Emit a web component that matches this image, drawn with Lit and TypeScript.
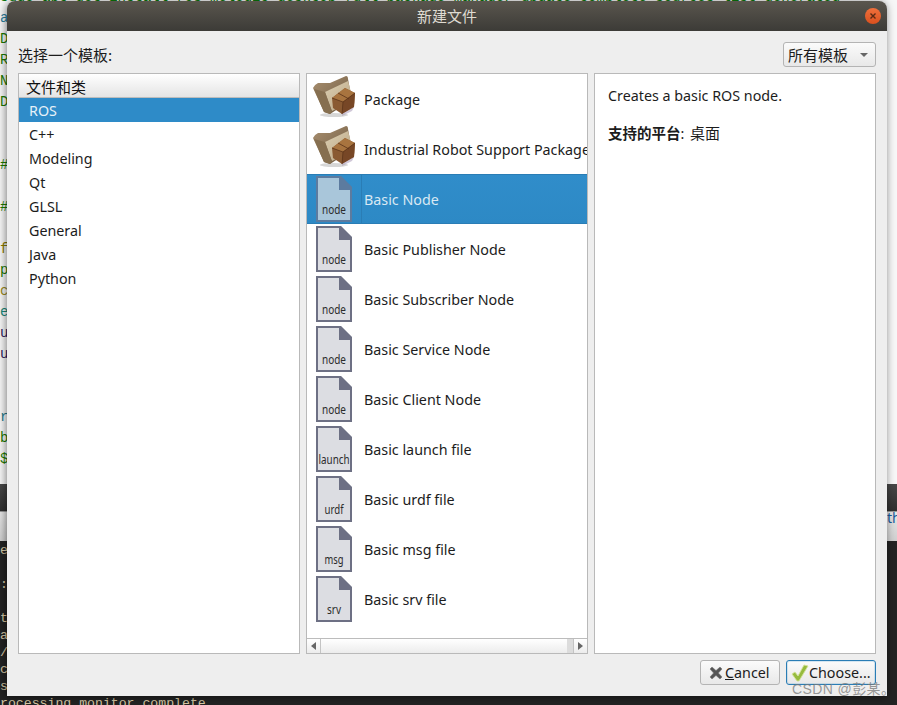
import { LitElement, html, css, svg } from 'lit';
import { customElement } from 'lit/decorators.js';
import { classMap } from 'lit/directives/class-map.js';

const CATEGORIES = ['ROS', 'C++', 'Modeling', 'Qt', 'GLSL', 'General', 'Java', 'Python'];

const TEMPLATES = [
  { name: 'Package', folder: true },
  { name: 'Industrial Robot Support Package', folder: true },
  { name: 'Basic Node', tag: 'node', fit: 24 },
  { name: 'Basic Publisher Node', tag: 'node', fit: 24 },
  { name: 'Basic Subscriber Node', tag: 'node', fit: 24 },
  { name: 'Basic Service Node', tag: 'node', fit: 24 },
  { name: 'Basic Client Node', tag: 'node', fit: 24 },
  { name: 'Basic launch file', tag: 'launch', fit: 31 },
  { name: 'Basic urdf file', tag: 'urdf', fit: 19 },
  { name: 'Basic msg file', tag: 'msg', fit: 19 },
  { name: 'Basic srv file', tag: 'srv', fit: 14 },
];

// what is left visible of the editor and terminal behind the dialog
const EDITOR_LINES = [
  ['sudo apt-get install ros-melodic-desktop-full package manager update complete sources list generated', '#0a7a0a'],
  ['a', '#2b7f9e'], ['D', '#1d7a00'], ['R', '#1d7a00'], ['N', '#1d7a00'], ['D', '#1d7a00'],
  [' ', ''], [' ', ''], ['#', '#1d7a00'], [' ', ''], ['#', '#1d7a00'], [' ', ''],
  ['f', '#8a7a00'], ['p', '#1d7a00'], ['c', '#9a8a20'], ['e', '#1c8a7a'], ['u', '#2a1a5a'], ['u', '#2a1a5a'],
  [' ', ''], [' ', ''], ['r', '#1c7a8a'], ['b', '#1d7a00'], ['$', '#1d7a00'],
];
const TERMINAL_LINES = ['e', ' ', ':', ' ', 't', 'a', '/', 'c', 's', 'rocessing monitor complete'];

const folderIcon = svg`
  <svg class="folder" width="48" height="48" viewBox="0 0 48 48">
    <defs>
      <linearGradient id="fb" x1="0" y1="0" x2="1" y2="1">
        <stop offset="0" stop-color="#a99070" /><stop offset="1" stop-color="#6a563e" />
      </linearGradient>
      <linearGradient id="pg" x1="0" y1="0" x2="1" y2="1">
        <stop offset="0" stop-color="#dccfb2" /><stop offset="1" stop-color="#b9a583" />
      </linearGradient>
    </defs>
    <ellipse cx="22" cy="41" rx="14" ry="2" fill="#000" opacity=".16" />
    <path d="M1 14 Q2 11 6 9 L18 9 L34 2 Q36 2 36 5 L40 26 L18 40 L12 38 Z" fill="url(#fb)" />
    <path d="M13 18 L36 7 L40 22 L40 27 L20 37 Z" fill="url(#pg)" />
    <path d="M2 15 L13 18 L20 38 L18 40 L12 38 Z" fill="#866f50" />
    <path d="M20 24 L33 14 L43 19 L42 33 L30 40 L21 34 Z" fill="#8a5a32" />
    <path d="M20 24 L33 14 L43 19 L31 28 Z" fill="#a8743f" />
    <path d="M31 28 L43 19 L42 33 L30 40 Z" fill="#774726" />
    <path d="M26 19 L37 25 M31 28 L30 40 M20 24 L31 28 L43 19" stroke="#5b3419" stroke-width=".8" fill="none" />
    <path d="M30 40 L42 33 L40 37 L30 42 Z" fill="#a99ab8" opacity=".55" />
  </svg>`;

const fileIcon = (tag: string, fit: number) => svg`
  <svg class="file" width="36" height="46" viewBox="0 0 36 46">
    <path class="sheet" d="M1 1 H24 L35 12 V45 H1 Z" />
    <path class="fold" d="M23 0 H25 L36 11 V14 H23 Z" />
    <text x="18" y="37.5" text-anchor="middle" textLength=${fit} lengthAdjust="spacingAndGlyphs">${tag}</text>
  </svg>`;

@customElement('app-root')
export class AppRoot extends LitElement {
  static styles = css`
    :host {
      display: block;
      position: relative;
      width: 897px;
      height: 705px;
      overflow: hidden;
      font-family: 'Noto Sans', 'Noto Sans CJK SC', sans-serif;
      font-size: 14.3px;
      color: #1c1c1c;
    }
    .cjk { font-family: 'Noto Sans CJK SC', sans-serif; font-size: 15px; }

    /* desktop behind the dialog */
    .editor {
      height: 484px;
      overflow: hidden;
      background: #f7f7f7;
      font: 14px/21px 'Liberation Mono', monospace;
    }
    .editor-lines { display: flex; flex-direction: column; margin-top: -13px; }
    .editor-lines div { height: 21px; white-space: pre; }
    .strip { height: 27px; background: linear-gradient(#474747, #2f2f2f); }
    .tabs {
      display: flex;
      justify-content: flex-end;
      height: 30px;
      box-sizing: border-box;
      border-top: 1px solid #999;
      background: linear-gradient(#e6e6e6, #cfcfcf);
      color: #15589a;
      font-size: 14px;
      line-height: 12px;
    }
    .tabs span { width: 10px; overflow: hidden; }
    .terminal {
      height: 164px;
      padding-top: 1px;
      overflow: hidden;
      background: #232323;
      color: #d8c9a6;
      font: 13.2px/17px 'Liberation Mono', monospace;
      white-space: pre;
    }

    /* dialog */
    .dialog {
      position: absolute;
      left: 7px;
      top: 1px;
      width: 880px;
      height: 695px;
      display: flex;
      flex-direction: column;
      background: #eeeeee;
      border-radius: 8px 8px 0 0;
      box-shadow: -1px 1px 8px rgba(0, 0, 0, 0.5);
    }
    .titlebar {
      flex: none;
      height: 30px;
      box-sizing: border-box;
      padding-bottom: 2px;
      display: flex;
      align-items: center;
      justify-content: center;
      position: relative;
      border-radius: 8px 8px 0 0;
      background: linear-gradient(#5a564e, #3c3b37);
      color: #dfdbd2;
    }
    .close {
      position: absolute;
      right: 6px;
      top: 7px;
      width: 16px;
      height: 16px;
    }
    .content {
      flex: 1;
      display: flex;
      flex-direction: column;
      padding: 11px 11px 11px;
      min-height: 0;
    }
    .top {
      flex: none;
      display: flex;
      justify-content: space-between;
      align-items: center;
      height: 25px;
    }
    .combo {
      width: 93px;
      height: 25px;
      box-sizing: border-box;
      display: flex;
      align-items: center;
      justify-content: space-between;
      padding: 0 7px 0 4px;
      border: 1px solid #b4b4b4;
      border-radius: 3px;
      background: linear-gradient(#fbfbfb, #e8e8e8);
    }
    .caret {
      width: 0;
      height: 0;
      border-left: 4px solid transparent;
      border-right: 4px solid transparent;
      border-top: 4px solid #666;
    }
    .panels {
      flex: 1;
      min-height: 0;
      margin-top: 6px;
      display: grid;
      grid-template-columns: repeat(3, 282px);
      gap: 6px;
    }
    .panel {
      box-sizing: border-box;
      border: 1px solid #b9b9b9;
      background: #fff;
      min-height: 0;
      display: flex;
      flex-direction: column;
      overflow: hidden;
    }
    .list-head {
      flex: none;
      height: 24px;
      box-sizing: border-box;
      padding: 2px 0 0 7px;
      line-height: 22px;
      color: #111;
      background: linear-gradient(#ffffff, #e4e4e4);
      border-bottom: 1px solid #bcbcbc;
    }
    .cat {
      flex: none;
      height: 24px;
      line-height: 25px;
      padding-left: 10px;
    }
    .cat.sel { background: #2e8bc8; color: #e6f1f8; }

    .rows { flex: 1; min-height: 0; overflow: hidden; }
    .row {
      height: 50px;
      display: flex;
      align-items: center;
      white-space: nowrap;
    }
    .row.sel {
      background: linear-gradient(#308dca, #2d89c5);
      box-shadow: inset 0 1px 0 #2a7db5, inset 0 -1px 0 #2a7db5;
      color: #d9e8f3;
    }
    .ic {
      flex: none;
      width: 54px;
      height: 100%;
      box-sizing: border-box;
      padding-left: 9px;
      display: flex;
      align-items: center;
    }
    .row.sel .ic { box-shadow: 1px 0 0 #2a7db5; }
    .folder { margin: -2px 0 0 -4px; }
    .label { padding-left: 3px; }
    .sheet { fill: #dcdde2; stroke: #6d7084; stroke-width: 2; }
    .fold { fill: #6d7084; }
    .file text {
      font: 12px 'Noto Sans', sans-serif;
      fill: #2b2b2b;
    }
    .row.sel .sheet { fill: #a9c6da; stroke: #5c7b9f; }
    .row.sel .fold { fill: #5c7b9f; }

    .hbar {
      flex: none;
      height: 14px;
      display: flex;
      border-top: 1px solid #bcbcbc;
      background: linear-gradient(#ffffff, #ececec);
    }
    .sbtn {
      flex: none;
      width: 13px;
      display: flex;
      align-items: center;
      justify-content: center;
    }
    .sbtn.l { border-right: 1px solid #c4c4c4; }
    .sbtn.r { border-left: 1px solid #c4c4c4; }
    .track { flex: 1; }
    .rest { flex: none; width: 6px; background: #dcdcdc; }
    .al, .ar { width: 0; height: 0; border-top: 4px solid transparent; border-bottom: 4px solid transparent; }
    .al { border-right: 5px solid #666; }
    .ar { border-left: 5px solid #666; }

    .desc { padding: 12px 13px; line-height: 20px; }
    .desc p { margin: 0 0 17px; }
    .desc b { font-family: 'Noto Sans CJK SC', sans-serif; font-size: 14.5px; font-weight: 700; }
    .desc .cjk { margin-left: 2px; }

    .actions {
      flex: none;
      margin-top: 6px;
      display: flex;
      justify-content: flex-end;
      gap: 6px;
    }
    .btn {
      height: 25px;
      box-sizing: border-box;
      display: flex;
      align-items: center;
      padding-left: 8px;
      border: 1px solid #b4b4b4;
      border-radius: 3px;
      background: linear-gradient(#fbfbfb, #e8e8e8);
    }
    .btn.cancel { width: 80px; gap: 2px; }
    .btn.choose {
      width: 90px;
      gap: 0;
      padding-left: 4px;
      border-color: #2a7db5;
      box-shadow: inset 0 0 0 1px rgba(46, 139, 200, 0.18);
    }

    .watermark {
      position: absolute;
      left: 792px;
      top: 678px;
      color: rgba(120, 120, 120, 0.75);
      font: 14px 'Liberation Sans', 'Noto Sans CJK SC', sans-serif;
      letter-spacing: 0.4px;
    }
  `;

  render() {
    return html`
      <div class="editor">
        <div class="editor-lines">
          ${EDITOR_LINES.map(([text, color]) => html`<div style="color:${color}">${text}</div>`)}
        </div>
      </div>
      <div class="strip"></div>
      <div class="tabs"><span>th</span></div>
      <div class="terminal">${TERMINAL_LINES.map(line => html`<div>${line}</div>`)}</div>

      <div class="dialog">
        <div class="titlebar">
          <span class="cjk">新建文件</span>
          <svg class="close" viewBox="0 0 16 16">
            <defs>
              <linearGradient id="cl" x1="0" y1="0" x2="0" y2="1">
                <stop offset="0" stop-color="#f0703c" /><stop offset="1" stop-color="#d9501e" />
              </linearGradient>
            </defs>
            <circle cx="8" cy="8" r="8" fill="url(#cl)" />
            <path d="M5.5 5.5 L10.5 10.5 M10.5 5.5 L5.5 10.5" stroke="#5a2a14" stroke-width="1.4" />
          </svg>
        </div>
        <div class="content">
          <div class="top">
            <span class="cjk">选择一个模板:</span>
            <div class="combo"><span class="cjk">所有模板</span><i class="caret"></i></div>
          </div>
          <div class="panels">
            <div class="panel">
              <div class="list-head cjk">文件和类</div>
              ${CATEGORIES.map((c, i) => html`<div class=${classMap({ cat: true, sel: i === 0 })}>${c}</div>`)}
            </div>
            <div class="panel">
              <div class="rows">
                ${TEMPLATES.map((t, i) => html`
                  <div class=${classMap({ row: true, sel: i === 2 })}>
                    <div class="ic">${t.folder ? folderIcon : fileIcon(t.tag!, t.fit!)}</div>
                    <div class="label">${t.name}</div>
                  </div>
                `)}
              </div>
              <div class="hbar">
                <div class="sbtn l"><i class="al"></i></div>
                <div class="track"></div>
                <div class="rest"></div>
                <div class="sbtn r"><i class="ar"></i></div>
              </div>
            </div>
            <div class="panel">
              <div class="desc">
                <p>Creates a basic ROS node.</p>
                <p><b>支持的平台</b>: <span class="cjk">桌面</span></p>
              </div>
            </div>
          </div>
          <div class="actions">
            <div class="btn cancel">
              <svg width="14" height="14" viewBox="0 0 14 14">
                <path d="M1 3 L3 1 L7 4.6 L11 1 L13 3 L9.4 7 L13 11 L11 13 L7 9.4 L3 13 L1 11 L4.6 7 Z" fill="#555" stroke="#777" stroke-width=".6" />
              </svg>
              <span><u>C</u>ancel</span>
            </div>
            <div class="btn choose">
              <svg width="18" height="20" viewBox="0 0 18 20">
                <path d="M1 11 L4 9 L7 13 L13 2 L17 3 L8 18 L6 18 Z" fill="#96bb3e" stroke="#d2e29a" stroke-width=".9" />
              </svg>
              <span>Choose...</span>
            </div>
          </div>
        </div>
      </div>
      <div class="watermark">CSDN @彭某。</div>
    `;
  }
}
